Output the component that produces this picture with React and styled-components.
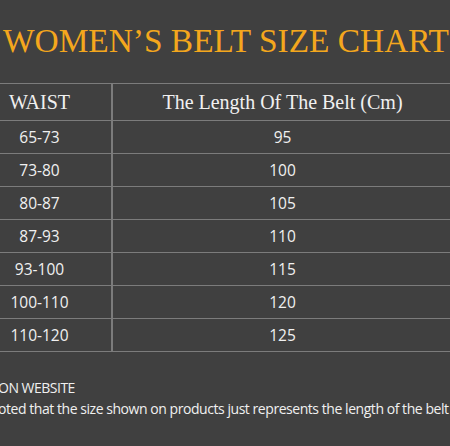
import React from 'react';
import styled, { createGlobalStyle } from 'styled-components';

const GlobalStyle = createGlobalStyle`
  html, body {
    margin: 0;
    padding: 0;
    background: #404040;
  }
`;

const Page = styled.div`
  width: 450px;
  height: 446px;
  overflow: hidden;
  background: #404040;
`;

const Title = styled.h1`
  margin: 0;
  height: 83px;
  padding-top: 21px;
  box-sizing: border-box;
  font-family: "Liberation Serif", serif;
  font-weight: 400;
  font-size: 33.4px;
  line-height: 40px;
  letter-spacing: 0;
  color: #f4a71d;
  white-space: nowrap;
  text-indent: 3px;
`;

const Table = styled.div`
  margin-left: -32px;
  width: 484px;
  border-top: 1px solid #7c7c7c;
`;

const Row = styled.div`
  display: grid;
  grid-template-columns: 145px 1fr;
  height: ${p => (p.$head ? 36 : 32)}px;
  border-bottom: 1px solid #7c7c7c;
`;

const Cell = styled.div`
  display: flex;
  align-items: center;
  justify-content: center;
  color: #f0f0f0;
  white-space: nowrap;
  font-family: ${p => (p.$head ? '"Liberation Serif", serif' : '"Open Sans", sans-serif')};
  font-size: ${p => (p.$head ? 20 : 15.5)}px;
  border-right: ${p => (p.$first ? '2px solid #7c7c7c' : 'none')};
`;

const Notes = styled.div`
  padding-top: 25px;
  font-family: "Open Sans", sans-serif;
  color: #f0f0f0;
  white-space: nowrap;
`;

const Note = styled.div`
  font-size: 14px;
  line-height: 21px;
  margin-left: -2px;
  letter-spacing: ${p => p.$spacing || 0}px;
`;

const sizes = [
  ['65-73', '95'],
  ['73-80', '100'],
  ['80-87', '105'],
  ['87-93', '110'],
  ['93-100', '115'],
  ['100-110', '120'],
  ['110-120', '125'],
];

export default function App() {
  return (
    <Page>
      <GlobalStyle />
      <Title>WOMEN’S BELT SIZE CHART</Title>
      <Table>
        <Row $head>
          <Cell $head $first>WAIST</Cell>
          <Cell $head>The Length Of The Belt (Cm)</Cell>
        </Row>
        {sizes.map(([waist, length]) => (
          <Row key={waist}>
            <Cell $first>{waist}</Cell>
            <Cell>{length}</Cell>
          </Row>
        ))}
      </Table>
      <Notes>
        <Note $spacing={-0.5}>ON WEBSITE</Note>
        <Note $spacing={-0.45}>oted that the size shown on products just represents the length of the belt</Note>
      </Notes>
    </Page>
  );
}
